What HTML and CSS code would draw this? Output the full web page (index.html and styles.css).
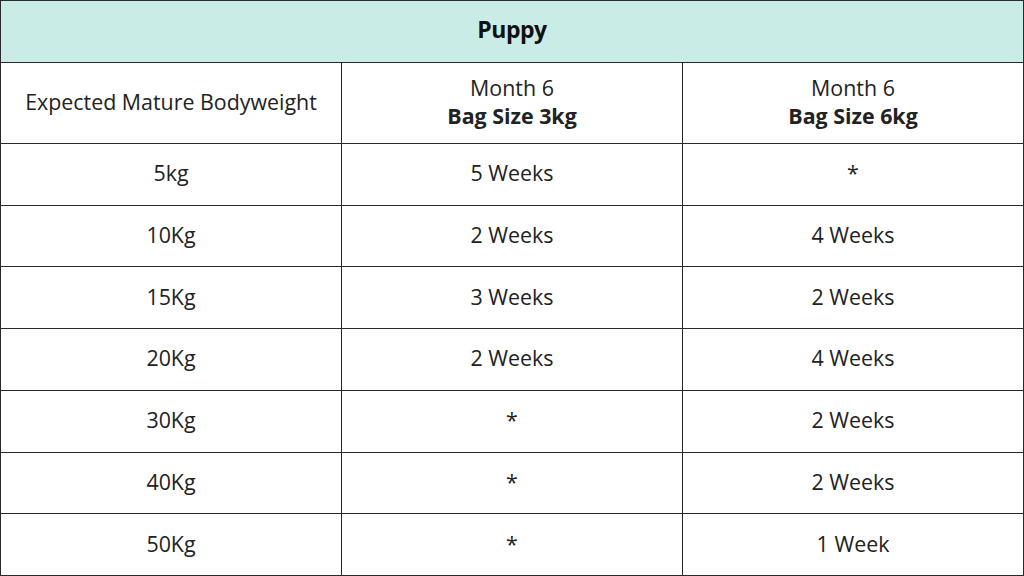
FILE: index.html
```html
<!DOCTYPE html>
<html>
<head>
<meta charset="utf-8">
<link rel="stylesheet" href="styles.css">
</head>
<body>
<div class="table">
  <div class="title">Puppy</div>
  <div class="cell head"><span>Expected Mature Bodyweight</span></div>
  <div class="cell head"><span>Month 6<br><b>Bag Size 3kg</b></span></div>
  <div class="cell head"><span>Month 6<br><b>Bag Size 6kg</b></span></div>

  <div class="cell">5kg</div><div class="cell">5 Weeks</div><div class="cell">*</div>
  <div class="cell">10Kg</div><div class="cell">2 Weeks</div><div class="cell">4 Weeks</div>
  <div class="cell">15Kg</div><div class="cell">3 Weeks</div><div class="cell">2 Weeks</div>
  <div class="cell">20Kg</div><div class="cell">2 Weeks</div><div class="cell">4 Weeks</div>
  <div class="cell">30Kg</div><div class="cell">*</div><div class="cell">2 Weeks</div>
  <div class="cell">40Kg</div><div class="cell">*</div><div class="cell">2 Weeks</div>
  <div class="cell">50Kg</div><div class="cell">*</div><div class="cell">1 Week</div>
</div>
</body>
</html>
```

FILE: styles.css
```css
html, body {
  margin: 0;
  padding: 0;
  background: #ffffff;
}
.table {
  width: 1024px;
  height: 576px;
  box-sizing: border-box;
  display: grid;
  grid-template-columns: 1fr 1fr 1fr;
  grid-template-rows: 61px 80px repeat(7, 1fr);
  gap: 1px;
  padding: 1px;
  background: #2a2a2a;
  font-family: "Open Sans", "Liberation Sans", sans-serif;
  color: #222222;
  font-size: 21.4px;
}
.title {
  grid-column: 1 / 4;
  background: #c9ece7;
  display: flex;
  align-items: center;
  justify-content: center;
  padding-bottom: 5px;
  font-weight: 700;
  font-size: 23px;
  letter-spacing: -0.5px;
  color: #111111;
}
.cell {
  background: #ffffff;
  display: flex;
  align-items: center;
  justify-content: center;
  text-align: center;
  line-height: 28px;
  padding-bottom: 2px;
}
.cell b {
  font-weight: 700;
}
```
